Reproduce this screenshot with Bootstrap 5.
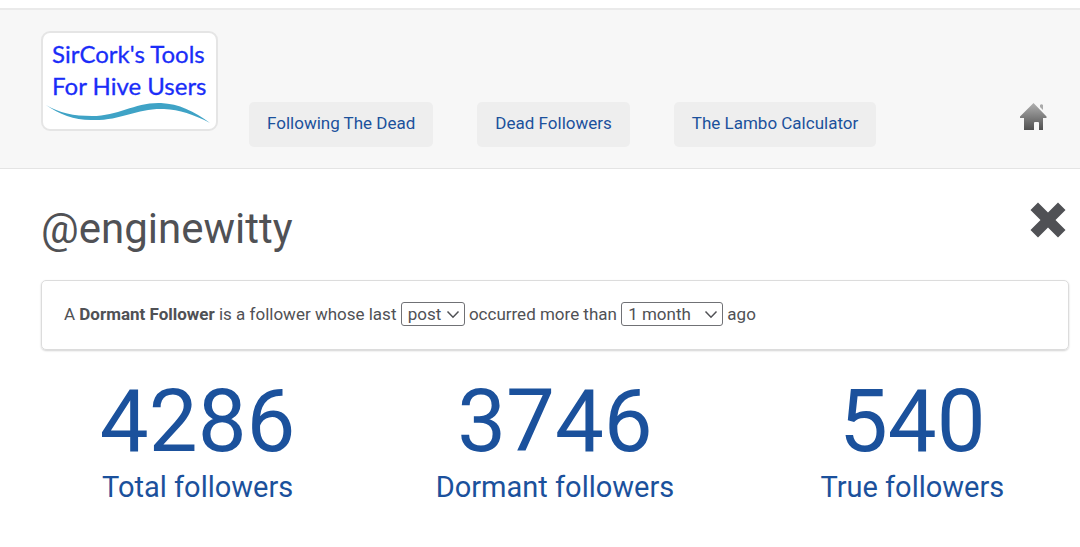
<!DOCTYPE html>
<html lang="en">
<head>
<meta charset="utf-8">
<meta name="viewport" content="width=device-width, initial-scale=1">
<title>SirCork's Tools For Hive Users</title>
<link href="https://cdn.jsdelivr.net/npm/bootstrap@5.3.0/dist/css/bootstrap.min.css" rel="stylesheet">
<style>
  body { font-family: Roboto, "Liberation Sans", sans-serif; font-size: 17px; line-height: 24px; color: #505155; background: #fff; overflow-x: hidden; }
  .site-bar { background: #f7f7f7; border-top: 2px solid #eaeaea; border-bottom: 1px solid #e4e4e4; padding: 21px 32px 37px 41px; }
  .logo { width: 177px; height: 100px; background: #fff; border: 2px solid #e5e5e5; border-radius: 9px; }
  .tool-links { gap: 44px; margin-left: 31px; margin-bottom: -16px; }
  .tool-link { background: #eee; color: #1b519c; font-size: 17px; line-height: 24px; padding: 9px 18px 12px; border: 0; border-radius: 5px; }
  .tool-link:hover { background: #e4e4e4; color: #1b519c; }
  .page-body { padding: 33px 11px 0 41px; }
  .account { font-size: 42px; line-height: 54px; }
  .close-btn { margin-right: 3px; color: #505155; }
  .panel { margin-top: 24px; padding: 21px 22px 23px; border: 1px solid #dcdcdc; border-radius: 5px; box-shadow: 0 1px 2px rgba(0,0,0,.18); }
  .pick { appearance: none; height: 24px; padding: 0 4px 0 6px; border: 1px solid #707175; border-radius: 3px; color: #505155; font-size: 17px; line-height: 22px;
    background: #fff url("data:image/svg+xml,%3Csvg xmlns='http://www.w3.org/2000/svg' width='14' height='9' viewBox='0 0 14 9'%3E%3Cpath d='M1.5 1.5 7 7.2l5.500-5.700' fill='none' stroke='%23505155' stroke-width='1.500'/%3E%3C/svg%3E") no-repeat right 4px center; }
  .pick-kind { width: 64px; }
  .pick-age { width: 102px; }
  .totals { margin: 20px -22px 0; color: #1b519c; }
  .figure-number { font-size: 87px; line-height: 102px; }
  .figure-label { font-size: 29px; line-height: 30px; }
</style>
</head>
<body class="pt-2">
<header class="site-bar d-flex align-items-end">
  <a class="logo flex-shrink-0" href="#" aria-label="SirCork's Tools For Hive Users">
    <svg class="d-block" width="173" height="96" viewBox="0 0 173 96">
      <g fill="#1a2df8" stroke="#1a2df8" stroke-width=".3" font-family="Lato, sans-serif" font-size="24">
        <text x="9" y="30">SirCork's Tools</text>
        <text x="9" y="62">For Hive Users</text>
      </g>
      <path fill="#3fa3c6" d="M3 72C16 80 31 83 49 83c27 0 43-14 69-13 18 1 33 8 49 20-17-9-30-13-46-14-27-1-43 12-73 11C31 87 16 81 3 72Z"/>
    </svg>
  </a>
  <nav class="tool-links d-flex" aria-label="Tools">
    <a class="btn tool-link" href="#">Following The Dead</a>
    <a class="btn tool-link" href="#">Dead Followers</a>
    <a class="btn tool-link" href="#">The Lambo Calculator</a>
  </nav>
  <a class="ms-auto" href="#" aria-label="Home">
    <svg class="d-block" width="28" height="28" viewBox="0 0 28 28">
      <defs><linearGradient id="roof" x1="0" y1="0" x2="0" y2="1"><stop offset="0" stop-color="#b0b0b0"/><stop offset="1" stop-color="#505050"/></linearGradient></defs>
      <path fill="#aaa" d="M20 2q1.500-1.500 3 0v5l-3-3Z"/>
      <path fill="url(#roof)" d="M13.500 0 0 13.500V15h4v12h10v-7q0-1 1-1h3q1 0 1 1v7h4V15h3.500v-1.500Z"/>
    </svg>
  </a>
</header>
<main class="page-body">
  <div class="d-flex justify-content-between align-items-start">
    <h1 class="account fw-normal m-0">@enginewitty</h1>
    <button class="close-btn btn p-0 border-0" type="button" aria-label="Close">
      <svg class="d-block" width="36" height="36" viewBox="0 0 36 36"><path fill="currentColor" d="M8 .5l10 10 10-10 7.500 7.500-10 10 10 10-7.500 7.500-10-10-10 10L.5 28l10-10L.5 8Z"/></svg>
    </button>
  </div>
  <section class="panel">
    A <strong>Dormant Follower</strong> is a follower whose last
    <select class="pick pick-kind" aria-label="Activity"><option>post</option><option>vote</option></select>
    occurred more than
    <select class="pick pick-age" aria-label="Period"><option>1 month</option><option>3 months</option><option>6 months</option></select>
    ago
  </section>
  <section class="totals row g-0 text-center">
    <div class="col-4"><div class="figure-number">4286</div><div class="figure-label">Total followers</div></div>
    <div class="col-4"><div class="figure-number">3746</div><div class="figure-label">Dormant followers</div></div>
    <div class="col-4"><div class="figure-number">540</div><div class="figure-label">True followers</div></div>
  </section>
</main>
<script src="https://cdn.jsdelivr.net/npm/bootstrap@5.3.0/dist/js/bootstrap.bundle.min.js"></script>
</body>
</html>
